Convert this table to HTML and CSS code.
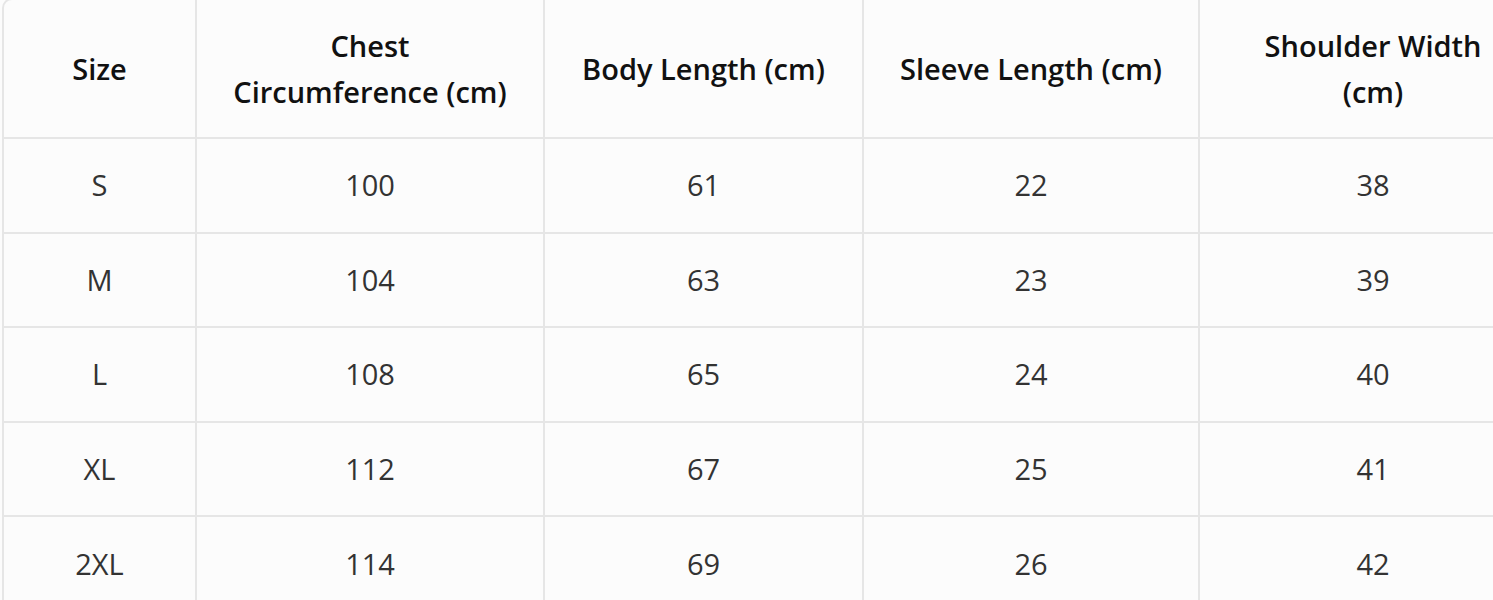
FILE: index.html
```html
<!DOCTYPE html>
<html lang="en">
<head>
<meta charset="utf-8">
<title>Size Chart</title>
<link rel="stylesheet" href="styles.css">
</head>
<body>
<div class="table-wrap">
  <table class="size-table">
    <colgroup>
      <col class="c1"><col class="c2"><col class="c3"><col class="c4"><col class="c5">
    </colgroup>
    <thead>
      <tr>
        <th>Size</th>
        <th>Chest<br>Circumference (cm)</th>
        <th>Body Length (cm)</th>
        <th>Sleeve Length (cm)</th>
        <th>Shoulder Width<br>(cm)</th>
      </tr>
    </thead>
    <tbody>
      <tr><td>S</td><td>100</td><td>61</td><td>22</td><td>38</td></tr>
      <tr><td>M</td><td>104</td><td>63</td><td>23</td><td>39</td></tr>
      <tr><td>L</td><td>108</td><td>65</td><td>24</td><td>40</td></tr>
      <tr><td>XL</td><td>112</td><td>67</td><td>25</td><td>41</td></tr>
      <tr><td>2XL</td><td>114</td><td>69</td><td>26</td><td>42</td></tr>
    </tbody>
  </table>
</div>
</body>
</html>
```
FILE: styles.css
```css
html, body {
  margin: 0;
  padding: 0;
  overflow: hidden;
  background: #fcfcfc;
}
body {
  font-family: "Open Sans", "Noto Sans", "Liberation Sans", sans-serif;
  color: #333;
}
.table-wrap {
  margin: -2px 0 0 2px;
  width: 1546px;
  border: 2px solid #e6e6e6;
  border-radius: 10px;
  overflow: hidden;
  background: #fcfcfc;
}
.size-table {
  table-layout: fixed;
  border-collapse: separate;
  border-spacing: 0;
  width: 1544px;
}
.c1 { width: 193px; }
.c2 { width: 348px; }
.c3 { width: 319px; }
.c4 { width: 336px; }
.c5 { width: 348px; }
.size-table th,
.size-table td {
  text-align: center;
  vertical-align: middle;
  border-right: 2px solid #e6e6e6;
  border-bottom: 2px solid #e6e6e6;
  line-height: 46px;
  padding: 23.3px 8px;
  font-size: 29px;
}
.size-table th {
  font-weight: 600;
  color: #111;
  padding-top: 22.5px;
  padding-bottom: 22.5px;
}
.size-table td {
  font-weight: 400;
  color: #333;
}
.size-table tbody tr:last-child td {
  border-bottom: none;
}
```
